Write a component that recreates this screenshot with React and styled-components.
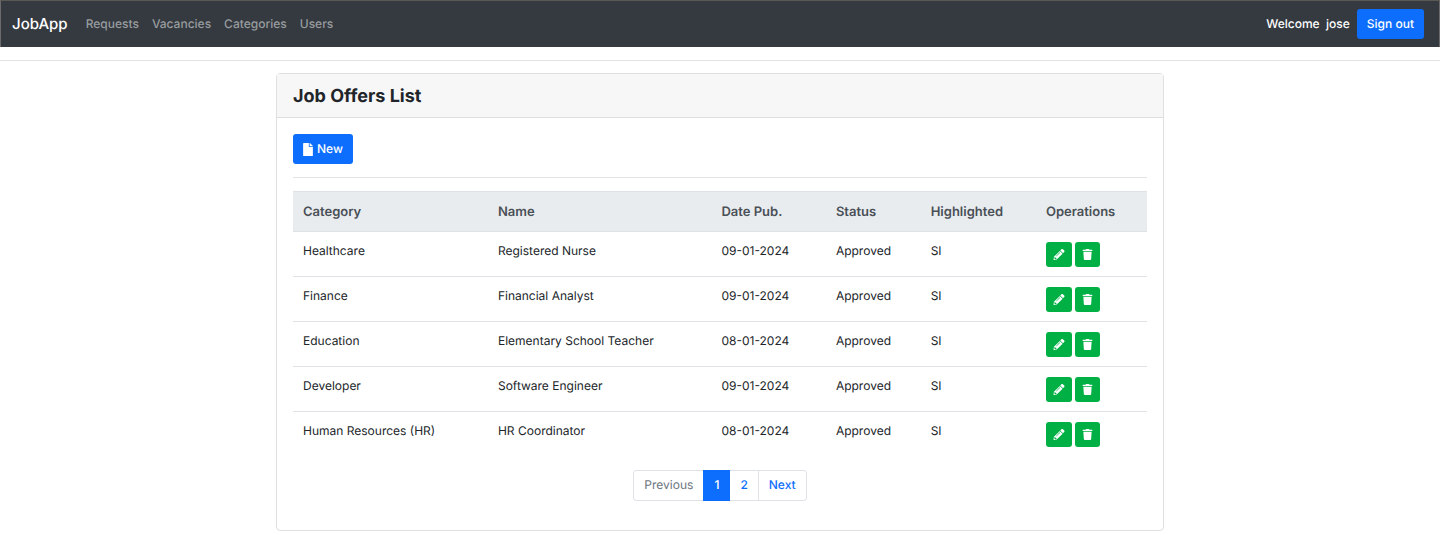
import React from "react";
import styled, { createGlobalStyle, css } from "styled-components";

const GlobalStyle = createGlobalStyle`
  *, *::before, *::after { box-sizing: border-box; }
  body {
    margin: 0;
    background: #fff;
    color: #212529;
    font: 400 12px/20px Inter, "Liberation Sans", sans-serif;
    text-rendering: geometricPrecision;
  }
  a { text-decoration: none; }
`;

const Navbar = styled.nav`
  display: flex;
  align-items: center;
  height: 47px;
  padding: 0 15px 0 11px;
  background: #343a40;
  border: 1px solid #6b6b6b;
  border-top-color: #5c5856;
  border-bottom: 0;
  font-weight: 500;
`;

const Brand = styled.a`
  margin-right: 18px;
  color: #fff;
  font-size: 15px;
`;

const NavList = styled.ul`
  display: flex;
  gap: 13px;
  flex: 1;
  margin: 0;
  padding: 0;
  list-style: none;
`;

const NavLink = styled.a`
  color: #999c9f;
`;

const Welcome = styled.span`
  margin-right: 7px;
  color: #fff;
  white-space: pre;
`;

const buttonBase = css`
  display: inline-flex;
  align-items: center;
  justify-content: center;
  border: 0;
  border-radius: 3px;
  color: #fff;
  font: inherit;
  font-weight: 500;
  text-rendering: inherit;
  cursor: pointer;
`;

const PrimaryButton = styled.button`
  ${buttonBase}
  gap: 4px;
  height: 30px;
  padding: 0 10px;
  background: #0d6efd;
`;

const IconButton = styled.button`
  ${buttonBase}
  height: 25px;
  padding: 0 7px;
  background: #00b044;
`;

const Rule = styled.hr`
  height: 1px;
  margin: 13px 0 ${({ $after = 12 }) => $after}px;
  border: 0;
  background: #e3e3e4;
`;

const Card = styled.main`
  width: 100%;
  max-width: 888px;
  margin: 0 auto;
  border: 1px solid #dfdfdf;
  border-radius: 4px;
`;

const CardHeader = styled.header`
  padding: 11px 16px 8px;
  background: #f7f7f7;
  border-bottom: 1px solid #dfdfdf;
`;

const Title = styled.h1`
  margin: 0;
  font-size: 18px;
  font-weight: 700;
  line-height: 24px;
`;

const CardBody = styled.div`
  padding: 16px 16px 29px;
`;

const Table = styled.table`
  width: 100%;
  table-layout: fixed;
  border-collapse: collapse;
`;

const Column = styled.col`
  width: ${({ $share }) => $share}%;
`;

const HeadCell = styled.th`
  padding: 10px 10px 9px;
  background: #e9ecef;
  border-top: 1px solid #dee2e6;
  border-bottom: 1px solid #dee2e6;
  color: #495057;
  font-size: 13px;
  font-weight: 600;
  text-align: left;
`;

const Cell = styled.td`
  height: 45px;
  padding: 10px 10px 0;
  border-top: 1px solid #dee2e6;
  line-height: 18px;
  vertical-align: top;
`;

const Operations = styled.div`
  display: flex;
  gap: 3px;
`;

const Pagination = styled.ul`
  display: flex;
  justify-content: center;
  margin: 13px 0 0;
  padding: 0;
  list-style: none;
`;

const PageItem = styled.li`
  & + & { margin-left: -1px; }
  &:first-child a { border-radius: 3px 0 0 3px; }
  &:last-child a { border-radius: 0 3px 3px 0; }
`;

const PageLink = styled.a`
  display: block;
  position: relative;
  z-index: ${({ $active }) => ($active ? 1 : 0)};
  padding: 4px 10px 5px;
  background: ${({ $active }) => ($active ? "#0d6efd" : "#fff")};
  border: 1px solid ${({ $active }) => ($active ? "#0d6efd" : "#dee2e6")};
  color: ${({ $active, $muted }) => ($active ? "#fff" : $muted ? "#6c757d" : "#0d6efd")};
  font-weight: ${({ $muted }) => ($muted ? 400 : 500)};
`;

const FileIcon = () => (
  <svg width="10" height="13" viewBox="0 0 384 512" fill="currentColor" aria-hidden="true">
    <path d="M224 136V0H24C10.700 0 0 10.700 0 24v464c0 13.300 10.700 24 24 24h336c13.300 0 24-10.700 24-24V160H248c-13.200 0-24-10.800-24-24zm160-14.100v6.100H256V0h6.100c6.400 0 12.500 2.500 17 7l97.900 98c4.500 4.500 7 10.600 7 16.900z" />
  </svg>
);

const PencilIcon = () => (
  <svg width="12" height="11" viewBox="0 0 512 512" fill="currentColor" aria-hidden="true">
    <path d="M497.900 142.100l-46.100 46.100c-4.700 4.700-12.300 4.700-17 0l-111-111c-4.700-4.700-4.700-12.300 0-17l46.100-46.100c18.700-18.700 49.100-18.700 67.900 0l60.100 60.100c18.800 18.700 18.800 49.100 0 67.900zM284.200 99.800L21.600 362.400.4 483.900c-2.900 16.400 11.400 30.600 27.800 27.800l121.500-21.300 262.600-262.600c4.700-4.700 4.700-12.300 0-17l-111-111c-4.800-4.700-12.400-4.700-17.100 0zM124.100 339.900c-5.500-5.500-5.500-14.300 0-19.800l154-154c5.500-5.500 14.300-5.500 19.800 0s5.500 14.300 0 19.800l-154 154c-5.500 5.500-14.300 5.500-19.800 0zM88 424h48v36.300l-64.500 11.300-31.100-31.100L51.700 376H88v48z" />
  </svg>
);

const TrashIcon = () => (
  <svg width="11" height="11" viewBox="0 0 448 512" fill="currentColor" aria-hidden="true">
    <path d="M432 32H312l-9.400-18.700A24 24 0 0 0 281.100 0H166.800a23.700 23.700 0 0 0-21.400 13.300L136 32H16A16 16 0 0 0 0 48v32a16 16 0 0 0 16 16h416a16 16 0 0 0 16-16V48a16 16 0 0 0-16-16zM53.200 467a48 48 0 0 0 47.900 45h245.800a48 48 0 0 0 47.900-45L416 128H32z" />
  </svg>
);

const navItems = ["Requests", "Vacancies", "Categories", "Users"];

const columns = [
  { label: "Category", share: 22.83 },
  { label: "Name", share: 26.17 },
  { label: "Date Pub.", share: 13.4 },
  { label: "Status", share: 11.1 },
  { label: "Highlighted", share: 13.5 },
  { label: "Operations", share: 13 },
];

const offers = [
  ["Healthcare", "Registered Nurse", "09-01-2024", "Approved", "SI"],
  ["Finance", "Financial Analyst", "09-01-2024", "Approved", "SI"],
  ["Education", "Elementary School Teacher", "08-01-2024", "Approved", "SI"],
  ["Developer", "Software Engineer", "09-01-2024", "Approved", "SI"],
  ["Human Resources (HR)", "HR Coordinator", "08-01-2024", "Approved", "SI"],
];

export default function App() {
  return (
    <>
      <GlobalStyle />
      <Navbar>
        <Brand href="#">JobApp</Brand>
        <NavList>
          {navItems.map((item) => (
            <li key={item}>
              <NavLink href="#">{item}</NavLink>
            </li>
          ))}
        </NavList>
        <Welcome>{"Welcome  jose"}</Welcome>
        <PrimaryButton type="button">Sign out</PrimaryButton>
      </Navbar>
      <Rule />
      <Card>
        <CardHeader>
          <Title>Job Offers List</Title>
        </CardHeader>
        <CardBody>
          <PrimaryButton type="button">
            <FileIcon />
            New
          </PrimaryButton>
          <Rule $after={13} />
          <Table>
            <colgroup>
              {columns.map(({ label, share }) => (
                <Column key={label} $share={share} />
              ))}
            </colgroup>
            <thead>
              <tr>
                {columns.map(({ label }) => (
                  <HeadCell key={label} scope="col">{label}</HeadCell>
                ))}
              </tr>
            </thead>
            <tbody>
              {offers.map((offer) => (
                <tr key={offer[0]}>
                  {offer.map((value, i) => (
                    <Cell key={columns[i].label}>{value}</Cell>
                  ))}
                  <Cell>
                    <Operations>
                      <IconButton type="button" aria-label={`Edit ${offer[1]}`}>
                        <PencilIcon />
                      </IconButton>
                      <IconButton type="button" aria-label={`Delete ${offer[1]}`}>
                        <TrashIcon />
                      </IconButton>
                    </Operations>
                  </Cell>
                </tr>
              ))}
            </tbody>
          </Table>
          <nav aria-label="Pages">
            <Pagination>
              <PageItem><PageLink href="#" $muted>Previous</PageLink></PageItem>
              <PageItem><PageLink href="#" $active aria-current="page">1</PageLink></PageItem>
              <PageItem><PageLink href="#">2</PageLink></PageItem>
              <PageItem><PageLink href="#">Next</PageLink></PageItem>
            </Pagination>
          </nav>
        </CardBody>
      </Card>
    </>
  );
}
